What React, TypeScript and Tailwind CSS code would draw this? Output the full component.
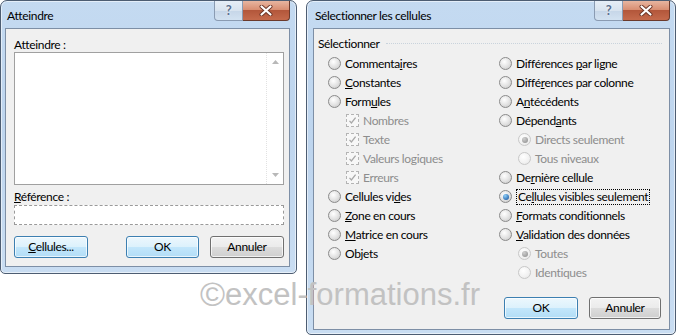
import React from "react";

const FONT = "font-['Lato',sans-serif] tracking-[-0.35px]";

const Radio = ({ checked = false, disabled = false }: { checked?: boolean; disabled?: boolean }) => (
  <span
    className={`inline-flex h-[13px] w-[13px] shrink-0 items-center justify-center rounded-full border ${
      disabled
        ? "border-[#c8c8c8] bg-[radial-gradient(circle_at_40%_35%,#ffffff_0%,#f1f1f1_60%,#e2e2e2_100%)]"
        : "border-[#8b8b8b] bg-[radial-gradient(circle_at_40%_35%,#ffffff_0%,#e4e4e4_50%,#c4c4c4_100%)]"
    }`}
  >
    {checked && (
      <span
        className={`h-[6px] w-[6px] rounded-full ${
          disabled
            ? "bg-[radial-gradient(circle_at_35%_30%,#d0d0d0,#8a8a8a)]"
            : "bg-[radial-gradient(circle_at_35%_30%,#8fd0fa,#0e4a96)]"
        }`}
      />
    )}
  </span>
);

const Check = () => (
  <span className="inline-flex h-[13px] w-[13px] shrink-0 items-center justify-center border border-dashed border-[#b4b4b4] bg-[#f7f7f7]">
    <svg width="9" height="9" viewBox="0 0 9 9">
      <path d="M1.5 4.8 L3.4 7 L7.6 1.6" fill="none" stroke="#a8a8a8" strokeWidth="1.3" />
    </svg>
  </span>
);

type RowProps = {
  children: React.ReactNode;
  control: React.ReactNode;
  indent?: string;
  disabled?: boolean;
  focus?: boolean;
};

const Row = ({ children, control, indent = "", disabled, focus }: RowProps) => (
  <div className={`flex h-[19px] items-center gap-[4px] ${indent}`}>
    {control}
    <span
      className={`whitespace-nowrap leading-[14px] ${disabled ? "text-[#8d8d8d]" : "text-black"} ${
        focus ? "border border-dotted border-black px-[1px]" : ""
      }`}
    >
      {children}
    </span>
  </div>
);

const Btn = ({ children, blue, w }: { children: React.ReactNode; blue?: boolean; w: string }) => (
  <div
    className={`flex h-[22px] items-center justify-center rounded-[3px] border shadow-[inset_0_0_0_1px_rgba(255,255,255,0.7)] ${
      blue
        ? "border-[#3c7fb1] bg-[linear-gradient(180deg,#ecf7fd_0%,#dcf1fc_50%,#c2e6fb_52%,#b2ddf6_100%)]"
        : "border-[#707070] bg-[linear-gradient(180deg,#f3f3f3_0%,#ebebeb_50%,#dcdcdc_52%,#cfcfcf_100%)]"
    } ${w}`}
  >
    {children}
  </div>
);

const TitleButtons = () => (
  <div className="flex h-[20px]">
    <div className="flex w-[29px] items-center justify-center rounded-bl-[4px] border border-t-0 border-[#8a9bb2] bg-[linear-gradient(180deg,#e6eef7_0%,#d8e3ef_50%,#c6d6e8_52%,#d3e2f1_100%)]">
      <span className="text-[13px] font-bold leading-none text-[#5a6f90] [text-shadow:0_0_2px_#fff]">?</span>
    </div>
    <div className="flex w-[47px] items-center justify-center rounded-br-[4px] border border-l-0 border-t-0 border-[#6b3a2c] bg-[linear-gradient(180deg,#e7b5a0_0%,#d98f73_45%,#b3573b_50%,#c46a4c_100%)]">
      <svg width="14" height="11" viewBox="0 0 14 11">
        <path d="M2.5 1.5 L11.5 9.5 M11.5 1.5 L2.5 9.5" stroke="#6a3426" strokeWidth="4" strokeLinecap="round" />
        <path d="M2.5 1.5 L11.5 9.5 M11.5 1.5 L2.5 9.5" stroke="#ffffff" strokeWidth="2.2" strokeLinecap="round" />
      </svg>
    </div>
  </div>
);

type DialogProps = {
  title: string;
  frame: string;
  children: React.ReactNode;
};

const Dialog = ({ title, frame, children }: DialogProps) => (
  <div
    className={`flex shrink-0 flex-col rounded-t-[7px] rounded-b-[5px] border border-[#4d5d72] bg-[linear-gradient(180deg,#c4daf1_0%,#bed5ee_45%,#c9ddf2_100%)] shadow-[inset_0_0_0_1px_rgba(255,255,255,0.55)] ${frame}`}
  >
    <div className="flex h-[27px] items-start justify-between">
      <span className="pl-[2px] pt-[7px] text-[12px] leading-[15px] text-black">{title}</span>
      <TitleButtons />
    </div>
    <div className="flex-1 border border-[#7d8fa6] bg-[#f0f0f0]">{children}</div>
  </div>
);

const Atteindre = () => (
  <Dialog title="Atteindre" frame="h-[274px] w-[297px] pl-[4px] pr-[6px] pb-[6px]">
    <div className="flex flex-col pl-[8px] pr-[5px] pt-[8px] text-[12px]">
      <span className="leading-[15px]">Atteindre :</span>
      <div className="flex h-[133px] border border-[#a0a0a0] bg-white">
        <div className="flex-1" />
        <div className="flex w-[17px] flex-col items-center justify-between border-l border-dotted border-[#e2e2e2] py-[7px]">
          <svg width="7" height="4" viewBox="0 0 7 4">
            <path d="M0 4 L3.5 0 L7 4 Z" fill="#b8b8b8" />
          </svg>
          <svg width="7" height="4" viewBox="0 0 7 4">
            <path d="M0 0 L3.5 4 L7 0 Z" fill="#b8b8b8" />
          </svg>
        </div>
      </div>
      <span className="mt-[4px] leading-[15px]">
        <u>R</u>éférence :
      </span>
      <div className="mt-[1px] h-[20px] border border-dashed border-[#9a9a9a] bg-white" />
      <div className="mt-[11px] flex items-center">
        <Btn blue w="w-[74px]">
          <span>
            <u>C</u>ellules...
          </span>
        </Btn>
        <div className="ml-auto flex gap-[11px]">
          <Btn blue w="w-[73px]">
            <span>OK</span>
          </Btn>
          <Btn w="w-[74px]">
            <span>Annuler</span>
          </Btn>
        </div>
      </div>
    </div>
  </Dialog>
);

const Selectionner = () => (
  <Dialog title="Sélectionner les cellules" frame="h-[335px] w-[370px] pl-[6px] pr-[5px] pb-[4px]">
    <div className="flex flex-col text-[12px]">
      <div className="flex items-center pl-[4px] pr-[7px] pt-[7px]">
        <span className="leading-[15px]">Sélectionner</span>
        <div className="ml-[6px] flex-1 border-t border-dotted border-[#c9d3dc]" />
      </div>
      <div className="mt-[3px] grid grid-cols-[171px_1fr] pl-[14px]">
        <div className="flex flex-col">
          <Row control={<Radio />}>
            Commenta<u>i</u>res
          </Row>
          <Row control={<Radio />}>
            <u>C</u>onstantes
          </Row>
          <Row control={<Radio />}>
            Form<u>u</u>les
          </Row>
          <Row control={<Check />} indent="pl-[18px]" disabled>
            Nombres
          </Row>
          <Row control={<Check />} indent="pl-[18px]" disabled>
            Texte
          </Row>
          <Row control={<Check />} indent="pl-[18px]" disabled>
            Valeurs logiques
          </Row>
          <Row control={<Check />} indent="pl-[18px]" disabled>
            Erreurs
          </Row>
          <Row control={<Radio />}>
            Cellules vi<u>d</u>es
          </Row>
          <Row control={<Radio />}>
            <u>Z</u>one en cours
          </Row>
          <Row control={<Radio />}>
            <u>M</u>atrice en cours
          </Row>
          <Row control={<Radio />}>
            Ob<u>j</u>ets
          </Row>
        </div>
        <div className="flex flex-col">
          <Row control={<Radio />}>
            Différences <u>p</u>ar ligne
          </Row>
          <Row control={<Radio />}>
            Diffé<u>r</u>ences par colonne
          </Row>
          <Row control={<Radio />}>
            A<u>n</u>técédents
          </Row>
          <Row control={<Radio />}>
            Dépend<u>a</u>nts
          </Row>
          <Row control={<Radio checked disabled />} indent="pl-[19px]" disabled>
            Directs seulement
          </Row>
          <Row control={<Radio disabled />} indent="pl-[19px]" disabled>
            Tous niveaux
          </Row>
          <Row control={<Radio />}>
            De<u>r</u>nière cellule
          </Row>
          <Row control={<Radio checked />} focus>
            Ce<u>l</u>lules visibles seulement
          </Row>
          <Row control={<Radio />}>
            <u>F</u>ormats conditionnels
          </Row>
          <Row control={<Radio />}>
            <u>V</u>alidation des données
          </Row>
          <Row control={<Radio checked disabled />} indent="pl-[19px]" disabled>
            Toutes
          </Row>
          <Row control={<Radio disabled />} indent="pl-[19px]" disabled>
            Identiques
          </Row>
        </div>
      </div>
      <div className="mt-[15px] flex justify-end gap-[11px] pr-[8px]">
        <Btn blue w="w-[74px]">
          <span>OK</span>
        </Btn>
        <Btn w="w-[72px]">
          <span>Annuler</span>
        </Btn>
      </div>
    </div>
  </Dialog>
);

export default function App() {
  return (
    <div className={`relative flex h-[335px] w-[677px] items-start gap-[9px] overflow-hidden bg-white ${FONT}`}>
      <Atteindre />
      <Selectionner />
      <div className="pointer-events-none absolute left-[200px] top-[277px] flex items-center font-['Liberation_Sans',Arial,sans-serif] text-[31px] leading-none tracking-normal text-[#c2c2c2]">
        <span className="text-[34px]">©</span>
        <span>excel-formations.fr</span>
      </div>
    </div>
  );
}
